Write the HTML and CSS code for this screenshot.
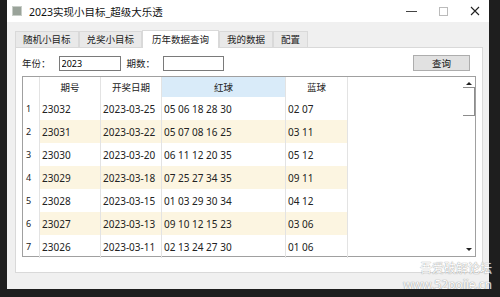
FILE: index.html
```html
<!DOCTYPE html>
<html lang="zh">

<head>
    <meta charset="UTF-8">
    <meta name="viewport" content="width=device-width, initial-scale=1.0">
    <title>2023实现小目标_超级大乐透</title>
    <link rel="stylesheet" href="styles.css">
</head>

<body>
    <div class="window">
        <div class="titlebar">
            <span class="app-icon"></span>
            <span class="title">2023实现小目标_超级大乐透</span>
            <div class="controls">
                <span class="ctl-min"></span>
                <span class="ctl-max"></span>
                <svg class="ctl-close" width="10" height="10" viewBox="0 0 10 10">
                    <path d="M1 1L9 9M9 1L1 9" stroke="#222" stroke-width="1.1" />
                </svg>
            </div>
        </div>

        <div class="tabs">
            <div class="tab">随机小目标</div>
            <div class="tab">兑奖小目标</div>
            <div class="tab active">历年数据查询</div>
            <div class="tab">我的数据</div>
            <div class="tab">配置</div>
        </div>

        <div class="panel">
            <div class="query-row">
                <label class="lbl">年份：</label>
                <input class="field field-year" type="text" value="2023">
                <label class="lbl">期数：</label>
                <input class="field field-issue" type="text">
                <button class="btn-query">查询</button>
            </div>

            <div class="grid-box">
                <div class="grid">
                    <div class="hd rn"></div>
                    <div class="hd">期号</div>
                    <div class="hd">开奖日期</div>
                    <div class="hd sel">红球</div>
                    <div class="hd">蓝球</div>

                    <div class="rn">1</div><div class="c">23032</div><div class="c">2023-03-25</div><div class="c">05 06 18 28 30</div><div class="c">02 07</div>
                    <div class="rn">2</div><div class="c alt">23031</div><div class="c alt">2023-03-22</div><div class="c alt">05 07 08 16 25</div><div class="c alt">03 11</div>
                    <div class="rn">3</div><div class="c">23030</div><div class="c">2023-03-20</div><div class="c">06 11 12 20 35</div><div class="c">05 12</div>
                    <div class="rn">4</div><div class="c alt">23029</div><div class="c alt">2023-03-18</div><div class="c alt">07 25 27 34 35</div><div class="c alt">09 11</div>
                    <div class="rn">5</div><div class="c">23028</div><div class="c">2023-03-15</div><div class="c">01 03 29 30 34</div><div class="c">04 12</div>
                    <div class="rn">6</div><div class="c alt">23027</div><div class="c alt">2023-03-13</div><div class="c alt">09 10 12 15 23</div><div class="c alt">03 06</div>
                    <div class="rn">7</div><div class="c">23026</div><div class="c">2023-03-11</div><div class="c">02 13 24 27 30</div><div class="c">01 06</div>
                </div>
                <div class="scrollbar">
                    <span class="arrow-up"></span>
                    <span class="thumb"></span>
                    <span class="arrow-down"></span>
                </div>
            </div>
        </div>

        <div class="watermark">
            <div>吾爱破解论坛</div>
            <div>www.52pojie.cn</div>
        </div>
    </div>
</body>

</html>
```

FILE: styles.css
```css
body {
    margin: 0;
    background-color: #1e1e1e;
    font-family: "Noto Sans", "Noto Sans CJK SC", sans-serif;
    font-size: 10px;
    color: #222;
}

.window {
    position: relative;
    margin-left: 7px;
    width: 482px;
    height: 289px;
    background-color: #f0f0f0;
    display: flex;
    flex-direction: column;
}

.titlebar {
    height: 22px;
    background-color: #fff;
    display: flex;
    align-items: center;
    padding-left: 5px;
}

.app-icon {
    width: 8px;
    height: 8px;
    background-color: #9aa39a;
    border: 1px solid #c8cec8;
    margin-right: 7px;
}

.title {
    font-size: 10.5px;
    color: #111;
}

.controls {
    margin-left: auto;
    display: flex;
    align-items: center;
    gap: 22px;
    padding-right: 9px;
}

.ctl-min {
    width: 11px;
    height: 1px;
    background-color: #444;
}

.ctl-max {
    width: 7px;
    height: 7px;
    border: 1px solid #bbb;
}

.tabs {
    height: 25px;
    display: flex;
    align-items: flex-end;
    padding-left: 8px;
}

.tab {
    height: 15px;
    line-height: 15px;
    padding: 0 7px;
    background-color: #e9e9e9;
    border: 1px solid #d9d9d9;
    border-bottom: none;
    font-size: 9.5px;
    color: #222;
}

.tab.active {
    height: 17px;
    line-height: 17px;
    background-color: #fff;
    padding: 0 9px;
    margin-bottom: -1px;
    position: relative;
}

.panel {
    margin: 0 6px 0 8px;
    height: 217px;
    background-color: #fff;
    border: 1px solid #d9d9d9;
    display: flex;
    flex-direction: column;
    padding: 7px 6px 0 6px;
}

.query-row {
    display: flex;
    align-items: center;
    height: 16px;
}

.lbl {
    font-size: 9.5px;
    margin-right: 8px;
}

.field {
    height: 14px;
    border: 1px solid #7a7a7a;
    padding: 0 2px;
    font-family: inherit;
    font-size: 9px;
    box-sizing: border-box;
}

.field-year {
    width: 62px;
    height: 15px;
    margin-right: 6px;
}

.field-issue {
    width: 61px;
    height: 15px;
}

.btn-query {
    margin-left: auto;
    margin-right: 6px;
    width: 57px;
    height: 16px;
    padding: 0;
    border: 1px solid #adadad;
    background-color: #e1e1e1;
    font-family: inherit;
    font-size: 9.5px;
    color: #111;
}

.grid-box {
    margin-top: 5px;
    width: 454px;
    height: 181px;
    box-sizing: border-box;
    border: 1px solid #a0a0a0;
    display: flex;
    justify-content: space-between;
}

.grid {
    display: grid;
    grid-template-columns: 17px 61px 61px 124px 62px;
    grid-template-rows: 20px repeat(7, 23px);
    align-self: flex-start;
}

.grid > div {
    display: flex;
    align-items: center;
    border-right: 1px solid #e3e3e3;
    white-space: nowrap;
}

.hd {
    justify-content: center;
    font-size: 9.5px;
    background-color: #fff;
}

.hd.sel {
    background-color: #d9ebf9;
}

.rn {
    padding-left: 3px;
    font-size: 9px;
}

.c {
    padding-left: 2px;
}

.c.alt {
    background-color: #fcf5e1;
}

.scrollbar {
    width: 13px;
    display: flex;
    flex-direction: column;
    align-items: center;
}

.arrow-up {
    margin-top: 5px;
    width: 0;
    height: 0;
    border-left: 3px solid transparent;
    border-right: 3px solid transparent;
    border-bottom: 3px solid #222;
}

.thumb {
    margin-top: 2px;
    width: 12px;
    height: 29px;
    box-sizing: border-box;
    border: 1px solid #8c8c8c;
    border-left: none;
    align-self: flex-end;
}

.arrow-down {
    margin-top: auto;
    margin-bottom: 5px;
    width: 0;
    height: 0;
    border-left: 3px solid transparent;
    border-right: 3px solid transparent;
    border-top: 3px solid #222;
}

.watermark {
    position: absolute;
    right: -3px;
    bottom: -4px;
    font-size: 12px;
    line-height: 16px;
    color: #fff;
    text-shadow: 0 0 1px #8a8a8a, 0 0 1px #8a8a8a;
    text-align: right;
    opacity: 0.8;
}
```
